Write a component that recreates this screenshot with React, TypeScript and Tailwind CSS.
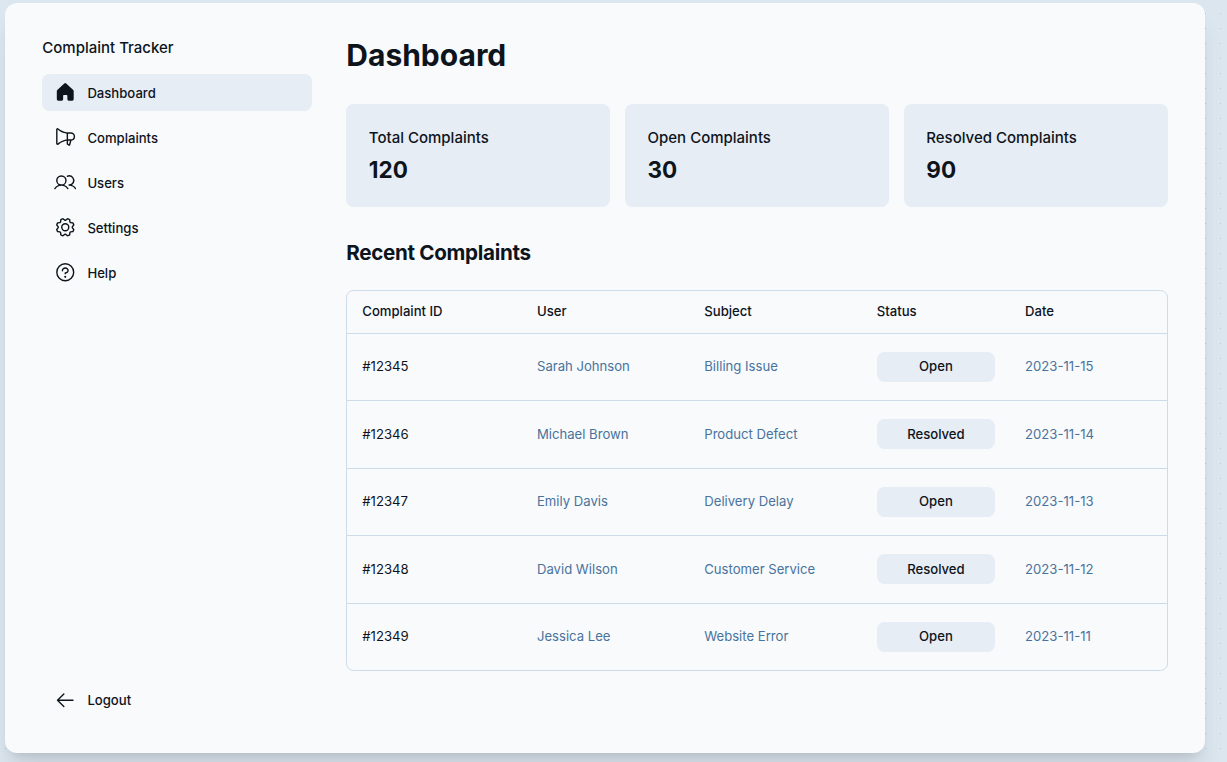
import { PiArrowLeft, PiGear, PiQuestion, PiUsers } from "react-icons/pi";
import type { ComponentType } from "react";

type Icon = ComponentType<{ className?: string }>;

function HouseIcon({ className }: { className?: string }) {
  return (
    <svg viewBox="0 0 256 256" fill="currentColor" className={className}>
      <path d="M224,115.55V208a16,16,0,0,1-16,16H168a16,16,0,0,1-16-16V168a8,8,0,0,0-8-8H112a8,8,0,0,0-8,8v40a16,16,0,0,1-16,16H48a16,16,0,0,1-16-16V115.55a16,16,0,0,1,5.17-11.78l80-75.48.11-.11a16,16,0,0,1,21.53,0,1.14,1.14,0,0,0,.11.11l80,75.48A16,16,0,0,1,224,115.55Z" />
    </svg>
  );
}

function MegaphoneIcon({ className }: { className?: string }) {
  return (
    <svg viewBox="0 0 256 256" fill="currentColor" className={className}>
      <path d="M240,120a48.05,48.05,0,0,0-48-48H152.2c-2.91-.17-53.62-3.74-101.91-44.24A16,16,0,0,0,24,40V200a16,16,0,0,0,26.29,12.25c37.77-31.68,77-40.76,93.71-43.3v31.72A16,16,0,0,0,151.12,214l11,7.33A16,16,0,0,0,186.5,212l11.77-44.36A48.07,48.07,0,0,0,240,120ZM40,199.93V40h0c42.81,35.91,86.63,45,104,47.24v65.48C126.65,155,82.84,164.07,40,199.93Zm131,8,0,.11-11-7.33V168h21.6ZM192,152H160V88h32a32,32,0,1,1,0,64Z" />
    </svg>
  );
}

const NAV: { label: string; icon: Icon; active?: boolean }[] = [
  { label: "Dashboard", icon: HouseIcon, active: true },
  { label: "Complaints", icon: MegaphoneIcon },
  { label: "Users", icon: PiUsers },
  { label: "Settings", icon: PiGear },
  { label: "Help", icon: PiQuestion },
];

const STATS = [
  { label: "Total Complaints", value: "120" },
  { label: "Open Complaints", value: "30" },
  { label: "Resolved Complaints", value: "90" },
];

const ROWS = [
  ["#12345", "Sarah Johnson", "Billing Issue", "Open", "2023-11-15"],
  ["#12346", "Michael Brown", "Product Defect", "Resolved", "2023-11-14"],
  ["#12347", "Emily Davis", "Delivery Delay", "Open", "2023-11-13"],
  ["#12348", "David Wilson", "Customer Service", "Resolved", "2023-11-12"],
  ["#12349", "Jessica Lee", "Website Error", "Open", "2023-11-11"],
];

function NavItem({ label, icon: Icon, active }: { label: string; icon: Icon; active?: boolean }) {
  return (
    <a
      className={
        "flex h-[37.5px] items-center gap-[11.35px] rounded-[7.5px] px-[11.25px] " +
        (active ? "bg-[#e7edf4]" : "")
      }
    >
      <Icon className="size-[22.5px] shrink-0" />
      <span className="pt-[2px] text-[13.125px] leading-[19.7px] font-medium">{label}</span>
    </a>
  );
}

function Sidebar() {
  return (
    <aside className="flex w-[270px] shrink-0 flex-col justify-between pb-[33.5px]">
      <div>
        <p className="mb-[14.3px] pt-[0.5px] text-[15px] leading-[22.5px] font-medium">Complaint Tracker</p>
        <nav className="flex flex-col gap-[7.5px]">
          {NAV.map((item) => (
            <NavItem key={item.label} {...item} />
          ))}
        </nav>
      </div>
      <NavItem label="Logout" icon={PiArrowLeft} />
    </aside>
  );
}

function ComplaintsTable() {
  return (
    <div className="h-[381.2px] overflow-hidden rounded-[7.5px] border border-[#cedbe8]">
      <table className="w-full table-fixed border-collapse text-left text-[13.125px] leading-[19.7px]">
        <colgroup>
          <col className="w-[174.7px]" />
          <col className="w-[167.3px]" />
          <col className="w-[172.5px]" />
          <col className="w-[148.3px]" />
          <col />
        </colgroup>
        <thead>
          <tr className="h-[42.5px]">
            {["Complaint ID", "User", "Subject", "Status", "Date"].map((h) => (
              <th key={h} className="px-[15px] font-medium">
                {h}
              </th>
            ))}
          </tr>
        </thead>
        <tbody>
          {ROWS.map(([id, user, subject, status, date]) => (
            <tr key={id} className="h-[67.5px] border-t border-[#cedbe8] text-[#49739c]">
              <td className="px-[15px] text-[#0d141c]">{id}</td>
              <td className="px-[15px]">{user}</td>
              <td className="px-[15px]">{subject}</td>
              <td className="px-[15px]">
                <div className="flex h-[30px] items-center justify-center rounded-[7.5px] bg-[#e7edf4] font-medium text-[#0d141c]">
                  {status}
                </div>
              </td>
              <td className="px-[15px]">{date}</td>
            </tr>
          ))}
        </tbody>
      </table>
    </div>
  );
}

export default function App() {
  return (
    <div className="h-[762px] overflow-hidden bg-[#dce6ef] bg-[radial-gradient(circle_at_7.5px_7.5px,#b3c8dc_0.75px,transparent_1px)] bg-[size:15px_15px] bg-[position:-2px_6px] pt-[3px] pl-[5px] font-['Inter',sans-serif] text-[#0d141c]">
      <div className="flex h-[749.5px] w-[1200px] gap-[34px] rounded-[12px] bg-[#f8fafc] pt-[33.5px] pr-[37.5px] pl-[37.3px] shadow-xl">
        <Sidebar />
        <main className="min-w-0 flex-1">
          <h1 className="text-[30px] leading-[37.5px] font-bold">Dashboard</h1>
          <section className="mt-[30px] grid grid-cols-3 gap-[15px]">
            {STATS.map((s) => (
              <div key={s.label} className="h-[103px] rounded-[7.5px] bg-[#e7edf4] px-[22.5px] pt-[23px]">
                <p className="text-[15px] leading-[22.5px] font-medium">{s.label}</p>
                <p className="mt-[6.2px] text-[22.5px] leading-[28px] font-bold">{s.value}</p>
              </div>
            ))}
          </section>
          <h2 className="mt-[32.7px] mb-[24.2px] text-[20.625px] leading-[25.8px] font-bold tracking-[-0.015em]">
            Recent Complaints
          </h2>
          <ComplaintsTable />
        </main>
      </div>
    </div>
  );
}
